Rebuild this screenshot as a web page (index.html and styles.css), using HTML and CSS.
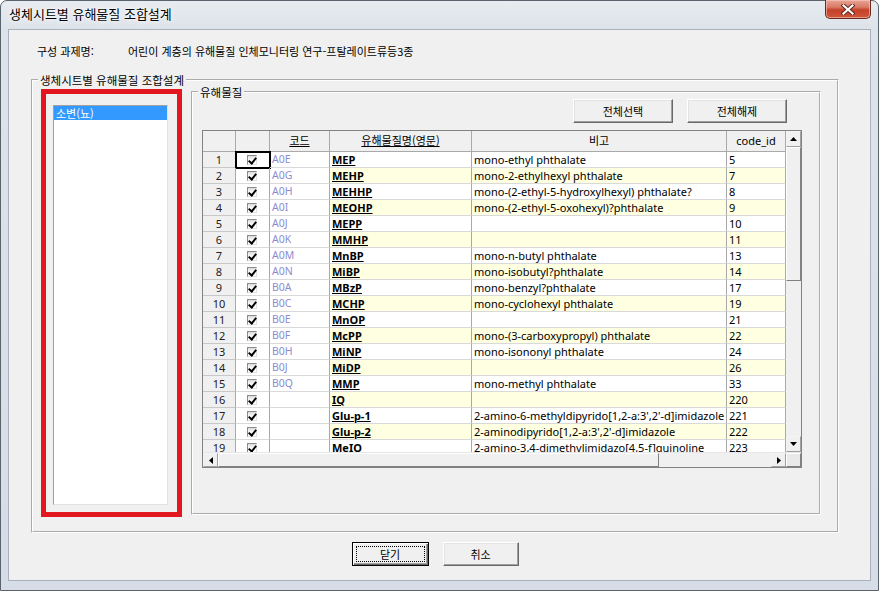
FILE: index.html
```html
<!DOCTYPE html>
<html lang="ko">
<head>
<meta charset="utf-8">
<title>생체시트별 유해물질 조합설계</title>
<link rel="stylesheet" href="styles.css">
</head>
<body>
<div class="window">
  <div class="titlebar">
    <span class="title">생체시트별 유해물질 조합설계</span>
    <div class="close">
      <svg width="14" height="11" viewBox="0 0 14 11">
        <path d="M2.5 1.5 L11.5 9.5 M11.5 1.5 L2.5 9.5" stroke="#5a2418" stroke-width="4" stroke-linecap="square" fill="none"/>
        <path d="M2.5 1.5 L11.5 9.5 M11.5 1.5 L2.5 9.5" stroke="#ffffff" stroke-width="2.2" stroke-linecap="square" fill="none"/>
      </svg>
    </div>
  </div>
  <div class="client">
    <div class="project">
      <span class="plabel">구성 과제명:</span>
      <span class="pvalue">어린이 계층의 유해물질 인체모니터링 연구-프탈레이트류등3종</span>
    </div>
    <fieldset class="group outer">
      <legend>생체시트별 유해물질 조합설계</legend>
      <div class="outer-body">
        <div class="redbox">
          <div class="listbox">
            <div class="item sel">소변(뇨)</div>
          </div>
        </div>
        <fieldset class="group inner">
          <legend>유해물질</legend>
          <div class="inner-body">
            <div class="btnrow">
              <button class="btn">전체선택</button>
              <button class="btn">전체해제</button>
            </div>
            <div class="grid">
              <div class="grid-main">
                <div class="rows">
                  <div class="row head">
                    <div class="c num"></div>
                    <div class="c chk"></div>
                    <div class="c hcode"><u>코드</u></div>
                    <div class="c hname"><u>유해물질명(영문)</u></div>
                    <div class="c hnote">비고</div>
                    <div class="c hcid">code_id</div>
                  </div>
                  <div class="row"><div class="c num">1</div><div class="c chk focus"><i class="cb"></i></div><div class="c code">A0E</div><div class="c name">MEP</div><div class="c note">mono-ethyl phthalate</div><div class="c cid">5</div></div>
                  <div class="row alt"><div class="c num">2</div><div class="c chk"><i class="cb"></i></div><div class="c code">A0G</div><div class="c name">MEHP</div><div class="c note">mono-2-ethylhexyl phthalate</div><div class="c cid">7</div></div>
                  <div class="row"><div class="c num">3</div><div class="c chk"><i class="cb"></i></div><div class="c code">A0H</div><div class="c name">MEHHP</div><div class="c note">mono-(2-ethyl-5-hydroxylhexyl) phthalate?</div><div class="c cid">8</div></div>
                  <div class="row alt"><div class="c num">4</div><div class="c chk"><i class="cb"></i></div><div class="c code">A0I</div><div class="c name">MEOHP</div><div class="c note">mono-(2-ethyl-5-oxohexyl)?phthalate</div><div class="c cid">9</div></div>
                  <div class="row"><div class="c num">5</div><div class="c chk"><i class="cb"></i></div><div class="c code">A0J</div><div class="c name">MEPP</div><div class="c note"></div><div class="c cid">10</div></div>
                  <div class="row alt"><div class="c num">6</div><div class="c chk"><i class="cb"></i></div><div class="c code">A0K</div><div class="c name">MMHP</div><div class="c note"></div><div class="c cid">11</div></div>
                  <div class="row"><div class="c num">7</div><div class="c chk"><i class="cb"></i></div><div class="c code">A0M</div><div class="c name">MnBP</div><div class="c note">mono-n-butyl phthalate</div><div class="c cid">13</div></div>
                  <div class="row alt"><div class="c num">8</div><div class="c chk"><i class="cb"></i></div><div class="c code">A0N</div><div class="c name">MiBP</div><div class="c note">mono-isobutyl?phthalate</div><div class="c cid">14</div></div>
                  <div class="row"><div class="c num">9</div><div class="c chk"><i class="cb"></i></div><div class="c code">B0A</div><div class="c name">MBzP</div><div class="c note">mono-benzyl?phthalate</div><div class="c cid">17</div></div>
                  <div class="row alt"><div class="c num">10</div><div class="c chk"><i class="cb"></i></div><div class="c code">B0C</div><div class="c name">MCHP</div><div class="c note">mono-cyclohexyl phthalate</div><div class="c cid">19</div></div>
                  <div class="row"><div class="c num">11</div><div class="c chk"><i class="cb"></i></div><div class="c code">B0E</div><div class="c name">MnOP</div><div class="c note"></div><div class="c cid">21</div></div>
                  <div class="row alt"><div class="c num">12</div><div class="c chk"><i class="cb"></i></div><div class="c code">B0F</div><div class="c name">McPP</div><div class="c note">mono-(3-carboxypropyl) phthalate</div><div class="c cid">22</div></div>
                  <div class="row"><div class="c num">13</div><div class="c chk"><i class="cb"></i></div><div class="c code">B0H</div><div class="c name">MiNP</div><div class="c note">mono-isononyl phthalate</div><div class="c cid">24</div></div>
                  <div class="row alt"><div class="c num">14</div><div class="c chk"><i class="cb"></i></div><div class="c code">B0J</div><div class="c name">MiDP</div><div class="c note"></div><div class="c cid">26</div></div>
                  <div class="row"><div class="c num">15</div><div class="c chk"><i class="cb"></i></div><div class="c code">B0Q</div><div class="c name">MMP</div><div class="c note">mono-methyl phthalate</div><div class="c cid">33</div></div>
                  <div class="row alt"><div class="c num">16</div><div class="c chk"><i class="cb"></i></div><div class="c code"></div><div class="c name">IQ</div><div class="c note"></div><div class="c cid">220</div></div>
                  <div class="row"><div class="c num">17</div><div class="c chk"><i class="cb"></i></div><div class="c code"></div><div class="c name">Glu-p-1</div><div class="c note">2-amino-6-methyldipyrido[1,2-a:3',2'-d]imidazole</div><div class="c cid">221</div></div>
                  <div class="row alt"><div class="c num">18</div><div class="c chk"><i class="cb"></i></div><div class="c code"></div><div class="c name">Glu-p-2</div><div class="c note">2-aminodipyrido[1,2-a:3',2'-d]imidazole</div><div class="c cid">222</div></div>
                  <div class="row"><div class="c num">19</div><div class="c chk"><i class="cb"></i></div><div class="c code"></div><div class="c name plain">MeIO</div><div class="c note">2-amino-3,4-dimethylimidazo[4,5-f]quinoline</div><div class="c cid">223</div></div>
                </div>
                <div class="vscroll">
                  <div class="sbtn"><svg width="7" height="4" viewBox="0 0 7 4"><polygon points="3.5,0 7,4 0,4" fill="#000"/></svg></div>
                  <div class="vthumb"></div>
                  <div class="vtrack"></div>
                  <div class="sbtn"><svg width="7" height="4" viewBox="0 0 7 4"><polygon points="0,0 7,0 3.5,4" fill="#000"/></svg></div>
                </div>
              </div>
              <div class="hscroll">
                <div class="sbtn"><svg width="4" height="7" viewBox="0 0 4 7"><polygon points="4,0 4,7 0,3.5" fill="#000"/></svg></div>
                <div class="hthumb"></div>
                <div class="htrack"></div>
                <div class="sbtn"><svg width="4" height="7" viewBox="0 0 4 7"><polygon points="0,0 0,7 4,3.5" fill="#000"/></svg></div>
                <div class="corner"></div>
              </div>
            </div>
          </div>
        </fieldset>
      </div>
    </fieldset>
    <div class="footer">
      <button class="btn default"><span class="focusrect">닫기</span></button>
      <button class="btn">취소</button>
    </div>
  </div>
</div>
</body>
</html>
```

FILE: styles.css
```css
* { box-sizing: border-box; }
html, body { margin: 0; padding: 0; }
body {
  width: 879px;
  height: 591px;
  overflow: hidden;
  background: #ffffff;
  font-family: "Noto Sans CJK KR", "Noto Sans", sans-serif;
  font-size: 11px;
  color: #000;
}
.window {
  width: 879px;
  height: 591px;
  border: 1px solid #59636e;
  border-radius: 7px 7px 0 0;
  background: linear-gradient(to bottom, #e8ecf1 0px, #dde3ea 28px, #d6dde6 100%);
  padding: 0 7px 9px 7px;
  display: flex;
  flex-direction: column;
}
.titlebar {
  height: 28px;
  display: flex;
  align-items: flex-start;
  flex: none;
}
.title {
  font-size: 13px;
  line-height: 16px;
  padding-top: 5px;
  padding-left: 1px;
  color: #000;
  text-shadow: 0 0 6px #fff, 0 0 3px #fff;
}
.close {
  margin-left: auto;
  margin-right: 0;
  width: 46px;
  height: 19px;
  margin-top: -1px;
  border: 1px solid #6b2a20;
  border-top: none;
  border-radius: 0 0 5px 5px;
  background: linear-gradient(to bottom, #e8a596 0%, #d97a65 40%, #c3412a 55%, #d0573a 100%);
  box-shadow: inset 0 0 0 1px rgba(255, 210, 200, 0.55);
  display: flex;
  align-items: center;
  justify-content: center;
}
.client {
  flex: 1;
  background: #f0f0f0;
  border: 1px solid #a7b2bd;
  display: flex;
  flex-direction: column;
}
.project {
  margin-top: 13px;
  padding-left: 28px;
  height: 16px;
  line-height: 16px;
  display: flex;
  font-size: 11px;
}
.plabel { width: 91px; }
.group {
  margin: 0;
  padding: 0;
  border: 2px groove #ffffff;
  min-width: 0;
}
.group > legend {
  margin-left: 5px;
  padding: 0 2px;
  font-size: 11.5px;
  line-height: 14px;
  height: 14px;
}
.outer {
  margin-top: 14px;
  margin-left: 22px;
  width: 808px;
}
.outer-body {
  display: flex;
  align-items: flex-start;
  height: 444px;
  padding: 2px 0 0 8px;
}
.redbox {
  width: 141px;
  height: 428px;
  border: 5px solid #e3171f;
  padding: 11px 8px 7px 7px;
  flex: none;
}
.listbox {
  width: 115px;
  height: 100%;
  background: #fff;
  border: 1px solid;
  border-color: #a0a0a0 #e3e3e3 #e3e3e3 #a0a0a0;
  padding: 0;
}
.item {
  height: 14px;
  line-height: 14px;
  padding-left: 2px;
  font-size: 11px;
}
.item.sel {
  background: #3399ff;
  color: #fff;
}
.inner {
  margin-top: -4px;
  margin-left: 9px;
  width: 630px;
  height: 430px;
  flex: none;
}
.inner-body {
  padding: 0 0 0 9px;
}
.btnrow {
  width: 600px;
  display: flex;
  justify-content: flex-end;
  gap: 14px;
  padding-right: 15px;
}
.btn {
  font-family: "Noto Sans CJK KR", "Noto Sans", sans-serif;
  font-size: 11px;
  color: #000;
  background: #f0f0f0;
  border: 1px solid;
  border-color: #ffffff #696969 #696969 #ffffff;
  box-shadow: inset -1px -1px 0 #a0a0a0, inset 1px 1px 0 #e3e3e3;
  height: 24px;
  width: 100px;
  padding: 0;
  margin: 0;
  line-height: 20px;
}
.grid {
  margin-top: 7px;
  width: 600px;
  height: 338px;
  border: 1px solid #828282;
  background: #fff;
  display: flex;
  flex-direction: column;
}
.grid-main {
  display: flex;
  height: 321px;
}
.rows {
  width: 583px;
  height: 321px;
  overflow: hidden;
  flex: none;
}
.row {
  display: grid;
  grid-template-columns: 33px 34px 60px 142px 255px 59px;
  height: 16px;
}
.c {
  border-right: 1px solid #a9a9a9;
  border-bottom: 1px solid #d9d9d9;
  height: 16px;
  line-height: 15px;
  padding: 0 2px;
  white-space: nowrap;
  overflow: hidden;
  font-family: "Noto Sans", "Noto Sans CJK KR", sans-serif;
  font-size: 11px;
}
.row.head { height: 21px; }
.row.head .c {
  height: 21px;
  line-height: 19px;
  background: #f0f0f0;
  text-align: center;
  border-bottom: 1px solid #a9a9a9;
  font-family: "Noto Sans CJK KR", "Noto Sans", sans-serif;
  font-size: 11px;
}
.row.head .hcid { font-family: "Noto Sans", sans-serif; }
.num {
  background: #f0f0f0;
  text-align: center;
  color: #222;
  border-bottom-color: #c8c8c8;
}
.chk {
  display: flex;
  align-items: center;
  justify-content: center;
  padding: 0 1px 0 0;
}
.chk.focus {
  outline: 2px solid #000;
  outline-offset: -1px;
}
.cb {
  display: block;
  width: 10px;
  height: 10px;
  border: 1px solid;
  border-color: #8a8a8a #e0e0e0 #e0e0e0 #8a8a8a;
  background: linear-gradient(to bottom, #dcdcdc, #ffffff 60%);
  position: relative;
}
.cb::after {
  content: "";
  position: absolute;
  left: 2px;
  top: 0px;
  width: 3px;
  height: 6px;
  border: solid #000;
  border-width: 0 2px 2px 0;
  transform: rotate(40deg);
}
.code {
  color: #8c8cd2;
  font-size: 10.5px;
}
.name {
  font-weight: bold;
  text-decoration: underline;
  padding-left: 2px;
}
.name.plain { text-decoration: none; }
.row.alt .name,
.row.alt .note,
.row.alt .cid { background: #ffffe1; }
.vscroll {
  width: 15px;
  height: 321px;
  display: flex;
  flex-direction: column;
  background: #f0f0f0;
  flex: none;
}
.sbtn {
  width: 15px;
  height: 16px;
  flex: none;
  background: #f0f0f0;
  border: 1px solid;
  border-color: #f4f4f4 #a0a0a0 #a0a0a0 #f4f4f4;
  display: flex;
  align-items: center;
  justify-content: center;
}
.vthumb {
  height: 134px;
  flex: none;
  background: #f0f0f0;
  border: 1px solid;
  border-color: #ffffff #808080 #808080 #ffffff;
}
.vtrack { flex: 1; background: #f0f0f0; }
.hscroll {
  height: 15px;
  display: flex;
  background: #f0f0f0;
  border-top: 1px solid #e6e6e6;
}
.hscroll .sbtn { height: 14px; width: 15px; }
.hthumb {
  width: 441px;
  flex: none;
  border: 1px solid;
  border-color: #ffffff #808080 #808080 #ffffff;
}
.htrack { flex: 1; }
.corner {
  width: 15px;
  flex: none;
  background: #e9e9e9;
  border: 1px solid;
  border-color: #ffffff #808080 #808080 #ffffff;
}
.footer {
  margin-top: 9px;
  display: flex;
  justify-content: center;
  gap: 14px;
  padding-right: 9px;
}
.footer .btn { width: 76px; }
.footer .btn.default {
  width: 77px;
  border: 1px solid #000;
  box-shadow: inset 1px 1px 0 #fff, inset -1px -1px 0 #696969, inset -2px -2px 0 #a0a0a0;
  padding: 3px;
}
.focusrect {
  display: block;
  height: 16px;
  line-height: 14px;
  border: 1px dotted #000;
}
```
